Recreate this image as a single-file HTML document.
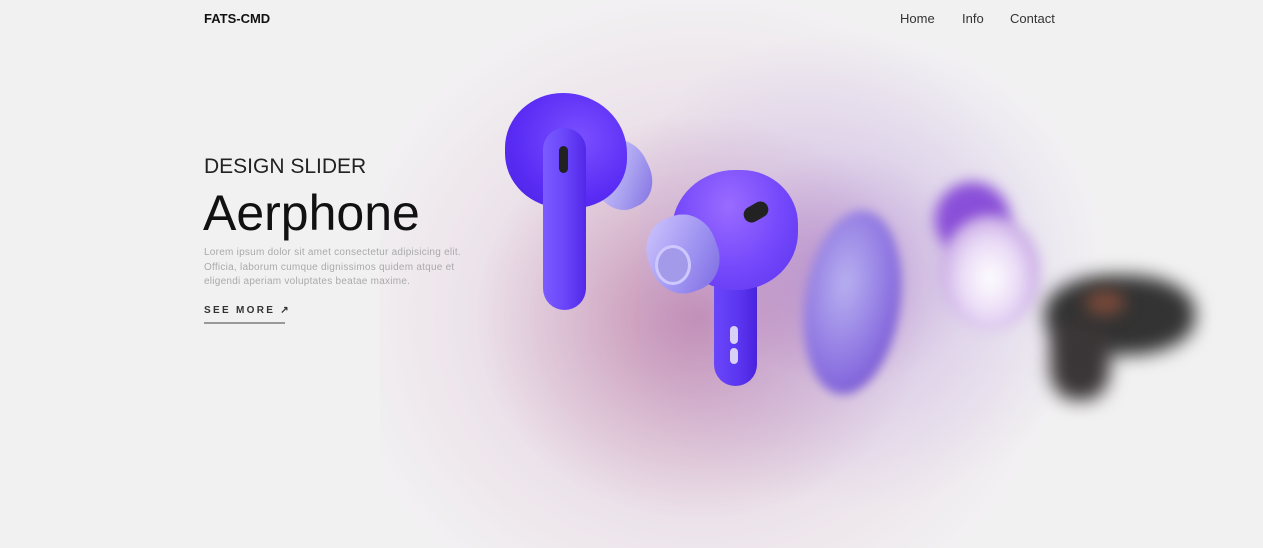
<!DOCTYPE html>
<html><head><meta charset="utf-8"><style>
*{margin:0;padding:0;box-sizing:border-box}
html,body{width:1263px;height:548px;overflow:hidden}
body{background:#f2f1f2;font-family:"Liberation Sans",sans-serif}
#w{position:relative;width:1263px;height:548px;overflow:hidden}
.a{position:absolute}
nav a{position:absolute;top:11px;font-size:13px;color:#333;text-decoration:none}
</style></head><body><div id="w">
<div class="a" style="left:380px;top:0px;width:760px;height:548px;background:radial-gradient(ellipse 48% 60% at 42% 58%,rgba(190,125,165,.9) 0%,rgba(200,150,185,.65) 30%,rgba(225,200,220,.35) 62%,rgba(242,241,242,0) 100%)"></div>
<div class="a" style="left:640px;top:30px;width:520px;height:480px;background:radial-gradient(ellipse 50% 50% at 40% 50%,rgba(150,100,200,.5) 0%,rgba(190,170,230,.28) 50%,rgba(242,241,242,0) 100%)"></div>
<div class="a" style="left:204px;top:11px;font-size:13px;font-weight:bold;color:#111">FATS-CMD</div>
<nav><a style="left:900px">Home</a><a style="left:962px">Info</a><a style="left:1010px">Contact</a></nav>
<div class="a" style="left:204px;top:155px;font-size:21px;color:#222">DESIGN SLIDER</div>
<div class="a" style="left:203px;top:184px;font-size:50px;color:#111">Aerphone</div>
<div class="a" style="left:204px;top:246px;font-size:10px;line-height:14.5px;color:#aaa;width:300px;letter-spacing:.25px">Lorem ipsum dolor sit amet consectetur adipisicing elit.<br>Officia, laborum cumque dignissimos quidem atque et<br>eligendi aperiam voluptates beatae maxime.</div>
<div class="a" style="left:204px;top:305px;font-size:10px;font-weight:bold;letter-spacing:2.3px;color:#333">SEE MORE ↗</div>
<div class="a" style="left:204px;top:322px;width:81px;height:2px;background:#999"></div>
<div class="a" style="left:805px;top:210px;width:95px;height:185px;border-radius:50%;background:radial-gradient(ellipse at 40% 40%,#b8b0f0,#8a70e0 60%,#6a3fc0);filter:blur(5px);transform:rotate(8deg)"></div>
<div class="a" style="left:935px;top:182px;width:75px;height:75px;border-radius:50%;background:#8a4fd8;filter:blur(7px)"></div>
<div class="a" style="left:940px;top:215px;width:100px;height:115px;border-radius:50%;background:radial-gradient(ellipse at 50% 55%,#fff,#e8d8f5 45%,#a070d0);filter:blur(6px)"></div>
<div class="a" style="left:1045px;top:275px;width:150px;height:80px;border-radius:45%;background:#333;filter:blur(9px)"></div>
<div class="a" style="left:1050px;top:320px;width:60px;height:80px;border-radius:40%;background:#3a3536;filter:blur(9px)"></div>
<div class="a" style="left:1085px;top:290px;width:40px;height:25px;border-radius:50%;background:#7a4a3a;filter:blur(8px)"></div>
<div class="a" style="left:592px;top:140px;width:58px;height:70px;border-radius:45%;background:linear-gradient(135deg,#e0dcff,#a9a0f0 60%,#7d6be0);transform:rotate(-25deg)"></div>
<div class="a" style="left:505px;top:93px;width:122px;height:115px;border-radius:50% 55% 45% 50%;background:radial-gradient(ellipse at 60% 40%,#7b50ff,#5a2cf5 60%,#4a22dd)"></div>
<div class="a" style="left:543px;top:128px;width:43px;height:182px;border-radius:22px;background:linear-gradient(90deg,#7a5cff,#6a46fa 50%,#5128e8)"></div>
<div class="a" style="left:559px;top:146px;width:9px;height:27px;border-radius:5px;background:#222"></div>
<div class="a" style="left:714px;top:250px;width:43px;height:136px;border-radius:22px;background:linear-gradient(90deg,#6a46fa,#5a35f0 60%,#4a22dd)"></div>
<div class="a" style="left:730px;top:326px;width:8px;height:18px;border-radius:4px;background:#d8d0f5"></div>
<div class="a" style="left:730px;top:348px;width:8px;height:16px;border-radius:4px;background:#d8d0f5"></div>
<div class="a" style="left:672px;top:170px;width:126px;height:120px;border-radius:50% 45% 48% 50%;background:radial-gradient(ellipse at 45% 30%,#9a6bff,#7448fb 55%,#5c34ee)"></div>
<div class="a" style="left:648px;top:215px;width:70px;height:78px;border-radius:45%;background:linear-gradient(135deg,#d0c8ff,#9c90f0 60%,#7a68e0);transform:rotate(-20deg)"></div>
<div class="a" style="left:655px;top:245px;width:36px;height:40px;border-radius:50%;background:#a49aea;border:3px solid #cfc8ff"></div>
<div class="a" style="left:743px;top:204px;width:26px;height:16px;border-radius:8px;background:#222;transform:rotate(-30deg)"></div>
</div></body></html>
